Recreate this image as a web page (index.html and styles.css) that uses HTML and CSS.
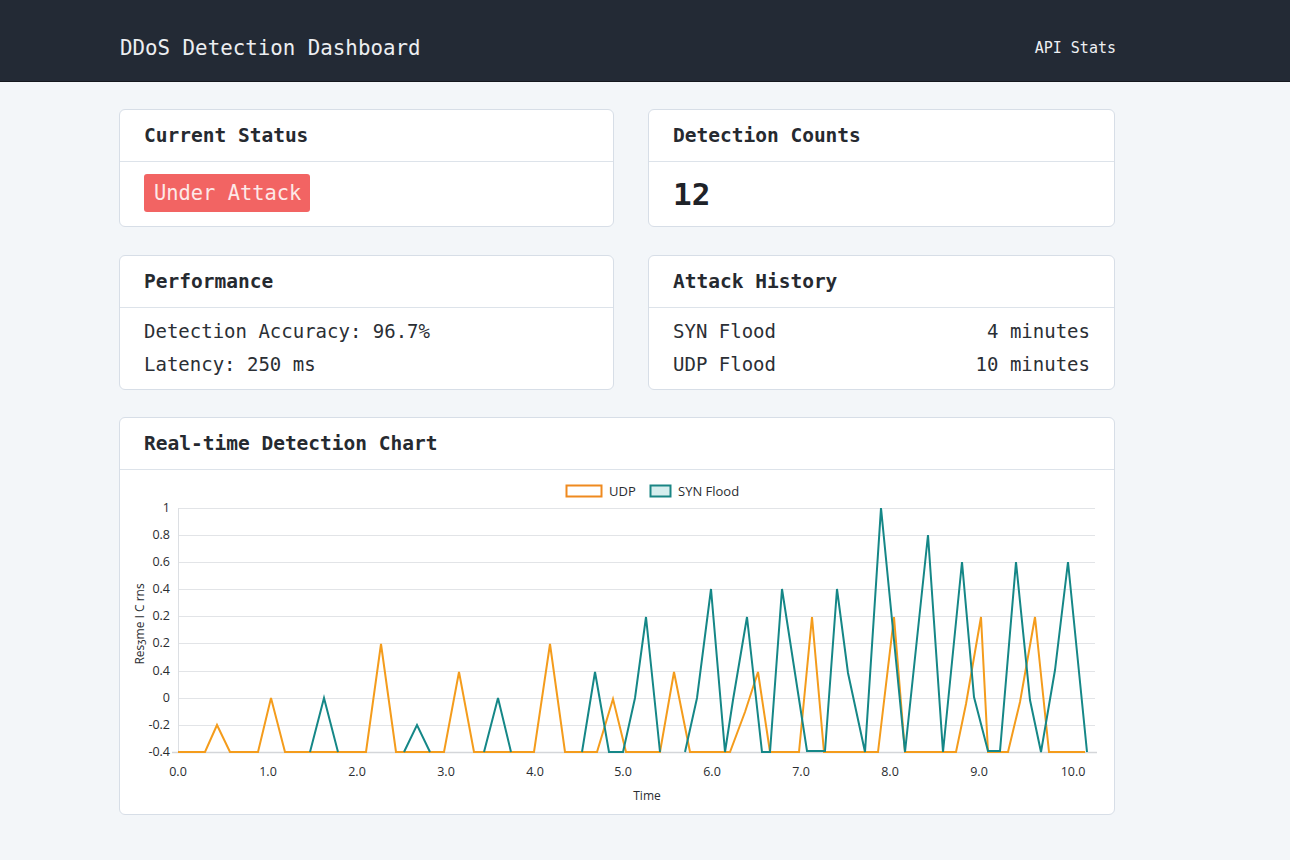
FILE: index.html
```html
<!DOCTYPE html>
<html lang="en">
<head>
<meta charset="utf-8">
<title>DDoS Detection Dashboard</title>
<link rel="stylesheet" href="styles.css">
</head>
<body>
<header class="topbar">
  <div class="topbar-inner">
    <div class="brand">DDoS Detection Dashboard</div>
    <nav class="nav"><a class="nav-link" href="#">API Stats</a></nav>
  </div>
</header>
<main class="content">
  <div class="grid">
    <section class="card card-short">
      <div class="card-head">Current Status</div>
      <div class="card-body status-body"><span class="badge">Under Attack</span></div>
    </section>
    <section class="card card-short">
      <div class="card-head">Detection Counts</div>
      <div class="card-body count-body"><span class="count">12</span></div>
    </section>
    <section class="card">
      <div class="card-head">Performance</div>
      <div class="card-body list-body">
        <div class="row">Detection Accuracy: 96.7%</div>
        <div class="row">Latency: 250 ms</div>
      </div>
    </section>
    <section class="card">
      <div class="card-head">Attack History</div>
      <div class="card-body list-body">
        <div class="row split"><span>SYN Flood</span><span>4 minutes</span></div>
        <div class="row split"><span>UDP Flood</span><span>10 minutes</span></div>
      </div>
    </section>
  </div>
  <section class="card chart-card">
    <div class="card-head">Real-time Detection Chart</div>
    <div class="chart-body">
      <svg class="chart" viewBox="120 470 995 344" width="995" height="344" xmlns="http://www.w3.org/2000/svg">
        <g class="grid-lines" stroke="#e2e4e7" stroke-width="1">
          <line x1="178" y1="508.5" x2="1095" y2="508.5"/>
          <line x1="178" y1="535.5" x2="1095" y2="535.5"/>
          <line x1="178" y1="562.5" x2="1095" y2="562.5"/>
          <line x1="178" y1="589.5" x2="1095" y2="589.5"/>
          <line x1="178" y1="616.5" x2="1095" y2="616.5"/>
          <line x1="178" y1="643.5" x2="1095" y2="643.5"/>
          <line x1="178" y1="671.5" x2="1095" y2="671.5"/>
          <line x1="178" y1="698.5" x2="1095" y2="698.5"/>
          <line x1="178" y1="725.5" x2="1095" y2="725.5"/>
        </g>
        <line x1="178.5" y1="508" x2="178.5" y2="753" stroke="#dcdfe3" stroke-width="1"/>
        <line x1="172" y1="752.5" x2="1097" y2="752.5" stroke="#d4d6d9" stroke-width="1.5"/>
        <g class="ytick" text-anchor="end">
          <text x="170" y="512">1</text>
          <text x="170" y="539">0.8</text>
          <text x="170" y="566">0.6</text>
          <text x="170" y="593">0.4</text>
          <text x="170" y="620">0.2</text>
          <text x="170" y="647">0.2</text>
          <text x="170" y="675">0.4</text>
          <text x="170" y="702">0</text>
          <text x="170" y="729">-0.2</text>
          <text x="170" y="756">-0.4</text>
        </g>
        <g class="xtick" text-anchor="middle">
          <text x="178" y="776">0.0</text>
          <text x="268" y="776">1.0</text>
          <text x="357" y="776">2.0</text>
          <text x="446" y="776">3.0</text>
          <text x="535" y="776">4.0</text>
          <text x="623" y="776">5.0</text>
          <text x="712" y="776">6.0</text>
          <text x="801" y="776">7.0</text>
          <text x="890" y="776">8.0</text>
          <text x="979" y="776">9.0</text>
          <text x="1073" y="776">10.0</text>
        </g>
        <text class="axis-title" x="647" y="800" text-anchor="middle">Time</text>
        <text class="axis-title" transform="translate(144 624) rotate(-90)" text-anchor="middle">Resȝme I C rns</text>
        <g class="legend">
          <rect x="566.5" y="485.5" width="35" height="11" fill="#fff" stroke="#ef8a1f" stroke-width="2"/>
          <text x="609" y="496">UDP</text>
          <rect x="650.5" y="485.5" width="20" height="11" fill="#d6eeee" stroke="#1a8584" stroke-width="2"/>
          <text x="678" y="496">SYN Flood</text>
        </g>
        <polyline fill="none" stroke="#f49c1c" stroke-width="2" stroke-linejoin="miter"
          points="178,752 205,752 217,725 230,752 258,752 271,698 285,752 366,752 381,644 396,752 444,752 459,672 474,752 534,752 550,644 565,752 597,752 613,699 626,752 660,752 674,672 690,752 730,752 745,712 758,672 770,752 799,752 812,617 824,752 878,752 894,617 905,752 956,752 966,704 981,617 988,752 1008,752 1020,702 1035,617 1049,752 1085,752"/>
        <polyline fill="none" stroke="#158787" stroke-width="2" stroke-linejoin="miter"
          points="310,752 324,698 338,752"/>
        <polyline fill="none" stroke="#158787" stroke-width="2" stroke-linejoin="miter"
          points="404,752 417,725 430,752"/>
        <polyline fill="none" stroke="#158787" stroke-width="2" stroke-linejoin="miter"
          points="484,752 498,698 511,752"/>
        <polyline fill="none" stroke="#158787" stroke-width="2" stroke-linejoin="miter"
          points="582,752 595,672 609,752 623,752 635,698 646,617 660,752"/>
        <polyline fill="none" stroke="#158787" stroke-width="2" stroke-linejoin="miter"
          points="685,752 697,698 711,589 725,752 733,700 747,617 762,752 770,752 782,589 807,751 825,751 837,589 848,673 865,752 881,508 905,752 928,535 943,752 962,562 974,697 988,751 1000,751 1016,562 1030,700 1041,752 1055,670 1068,562 1087,752"/>
      </svg>
    </div>
  </section>
</main>
</body>
</html>
```
FILE: styles.css
```css
* { box-sizing: border-box; }

html, body {
  margin: 0;
  padding: 0;
}

body {
  background: #f3f6f9;
  font-family: "DejaVu Sans Mono", "Liberation Mono", monospace;
  color: #1f2329;
  min-height: 860px;
}

.topbar {
  background: #232a35;
  height: 82px;
  border-bottom: 1px solid #14181e;
}

.topbar-inner {
  width: 996px;
  margin-left: 120px;
  height: 100%;
  display: flex;
  align-items: center;
  justify-content: space-between;
  padding-top: 14px;
}

.brand {
  color: #eceef1;
  font-size: 20.8px;
}

.nav-link {
  color: #eef0f3;
  font-size: 15px;
  text-decoration: none;
}

.content {
  width: 996px;
  margin-left: 119px;
  padding-top: 27px;
}

.grid {
  display: grid;
  grid-template-columns: 495px 467px;
  column-gap: 34px;
  row-gap: 28px;
}

.card {
  background: #fff;
  border: 1px solid #d7dee7;
  border-radius: 6px;
}

.card-head {
  height: 52px;
  display: flex;
  align-items: center;
  padding: 0 24px;
  font-size: 19.5px;
  font-weight: bold;
  border-bottom: 1px solid #dde3ea;
  color: #262a30;
}

.card-body {
  padding: 0 24px;
}

.status-body {
  padding-top: 12px;
  padding-bottom: 13px;
}

.badge {
  display: inline-block;
  background: #f26463;
  color: #fde9e8;
  font-size: 20.4px;
  line-height: 38px;
  height: 38px;
  padding: 0 9px 0 10px;
  border-radius: 3px;
}

.count-body {
  height: 64px;
  display: flex;
  align-items: center;
}

.count {
  font-size: 31px;
  font-weight: bold;
  color: #1e2228;
}

.list-body {
  padding-top: 7px;
  padding-bottom: 8px;
}

.row {
  font-size: 19px;
  line-height: 33px;
  color: #2b2f35;
}

.split {
  display: flex;
  justify-content: space-between;
}

.chart-card {
  margin-top: 27px;
  width: 996px;
}

.chart-body {
  height: 344px;
}

.chart {
  display: block;
}

.ytick text, .xtick text {
  font-family: "Open Sans", "Lato", sans-serif;
  font-size: 12.5px;
  fill: #2a2d31;
}

.axis-title {
  font-family: "Open Sans", "Lato", sans-serif;
  font-size: 12px;
  fill: #2a2d31;
}

.legend text {
  font-family: "Open Sans", "Lato", sans-serif;
  font-size: 13px;
  fill: #2a2d31;
}
```
